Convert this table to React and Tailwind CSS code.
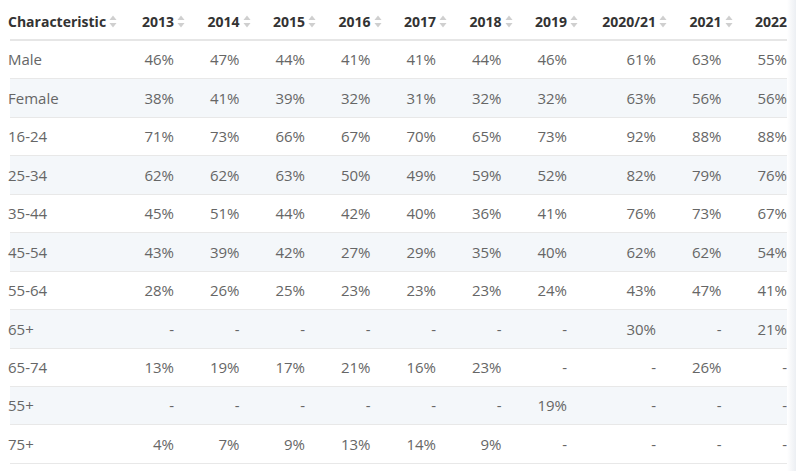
const years = ['2013', '2014', '2015', '2016', '2017', '2018', '2019', '2020/21', '2021', '2022']

const rows = [
  ['Male', '46%', '47%', '44%', '41%', '41%', '44%', '46%', '61%', '63%', '55%'],
  ['Female', '38%', '41%', '39%', '32%', '31%', '32%', '32%', '63%', '56%', '56%'],
  ['16-24', '71%', '73%', '66%', '67%', '70%', '65%', '73%', '92%', '88%', '88%'],
  ['25-34', '62%', '62%', '63%', '50%', '49%', '59%', '52%', '82%', '79%', '76%'],
  ['35-44', '45%', '51%', '44%', '42%', '40%', '36%', '41%', '76%', '73%', '67%'],
  ['45-54', '43%', '39%', '42%', '27%', '29%', '35%', '40%', '62%', '62%', '54%'],
  ['55-64', '28%', '26%', '25%', '23%', '23%', '23%', '24%', '43%', '47%', '41%'],
  ['65+', '-', '-', '-', '-', '-', '-', '-', '30%', '-', '21%'],
  ['65-74', '13%', '19%', '17%', '21%', '16%', '23%', '-', '-', '26%', '-'],
  ['55+', '-', '-', '-', '-', '-', '-', '19%', '-', '-', '-'],
  ['75+', '4%', '7%', '9%', '13%', '14%', '9%', '-', '-', '-', '-'],
]

function SortIcon() {
  return (
    <svg width="8" height="13" viewBox="0 0 8 13" className="ml-[3px] shrink-0">
      <path d="M4 0.5 L7.5 5 L0.5 5 Z" fill="#cfcfcf" />
      <path d="M4 12.5 L7.5 8 L0.5 8 Z" fill="#cfcfcf" />
    </svg>
  )
}

function colWidth(i) {
  return i === 7 ? 'w-[89px]' : 'w-[65.5px]'
}

export default function App() {
  return (
    <div
      className="relative w-[796px] h-[471px] bg-white overflow-hidden"
      style={{ fontFamily: '"Open Sans", "Liberation Sans", sans-serif' }}
    >
      <div className="w-[787px] overflow-hidden">
        {/* Header */}
        <div className="ml-[10px] w-[860px] h-[41px] pt-[3px] flex items-center border-b-2 border-[#e6e6e6] text-[14px] font-bold text-[#333]">
          <div className="w-[120.5px] shrink-0 flex items-center -ml-[2px]">
            <span>Characteristic</span>
            <SortIcon />
          </div>
          {years.map((y, i) => (
            <div key={y} className={`${colWidth(i)} shrink-0 flex items-center justify-end pr-[9px]`}>
              <span>{y}</span>
              <SortIcon />
            </div>
          ))}
        </div>

        {/* Body */}
        {rows.map((r, ri) => (
          <div
            key={ri}
            className={`ml-[10px] w-[860px] h-[38.45px] flex items-center border-b border-[#e8e8e8] text-[15px] text-[#666] ${ri % 2 === 1 ? 'bg-[#f4f7fa]' : 'bg-white'}`}
          >
            <div className="w-[120.5px] shrink-0 -ml-[2px]">{r[0]}</div>
            {r.slice(1).map((v, i) => (
              <div key={i} className={`${colWidth(i)} shrink-0 text-right pr-[20px]`}>
                {v}
              </div>
            ))}
          </div>
        ))}
      </div>

      {/* right edge fade */}
      <div className="absolute top-0 right-0 w-[9px] h-full bg-gradient-to-r from-white to-[#eceff3]" />
    </div>
  )
}
